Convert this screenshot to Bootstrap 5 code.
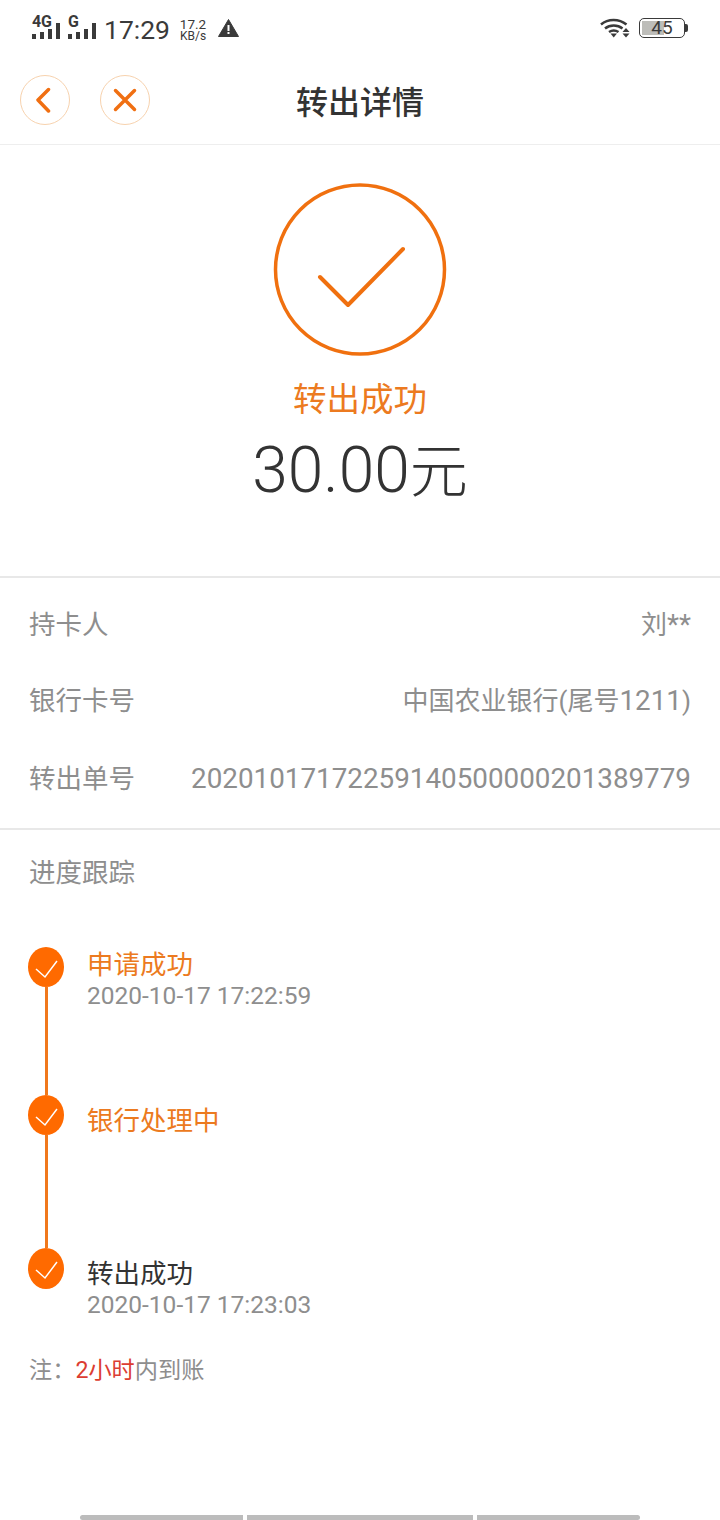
<!DOCTYPE html>
<html lang="zh-CN">
<head>
  <meta charset="UTF-8">
  <title>转出详情</title>
  <link rel="stylesheet" href="https://cdn.jsdelivr.net/npm/bootstrap@5.3.0/dist/css/bootstrap.min.css">
  <style>
    html, body { height: 1520px; overflow: hidden; }
    body { font-family: Roboto, "Liberation Sans", "Noto Sans CJK SC", sans-serif; background: #fff; color: #333; }
    .page-wrap { height: 1520px; }

    /* status bar */
    .status-bar { height: 58px; padding: 15px 32px 0 32px; color: #3a3a3a; }
    .signal-box { position: relative; width: 28px; height: 24px; margin-right: 8px; }
    .signal-box svg { display: block; }
    .signal-txt { position: absolute; left: 0; top: -1px; font-size: 16px; line-height: 16px; font-weight: 700; letter-spacing: -.3px; }
    .clock-txt { font-size: 26.5px; line-height: 30px; margin: 0 9px 0 0; }
    .speed-txt { font-size: 13.5px; line-height: 12px; width: 28px; margin-top: 3px; text-align: center; }
    .speed-txt span { display: block; font-size: 12px; }
    .warn-icon { margin: 4px 0 0 11px; }
    .wifi-icon { margin: 3px 9px 0 0; }
    .batt-box { position: relative; width: 46px; height: 20px; border: 1.5px solid #3a3a3a; border-radius: 5px; margin-top: 3px; font-size: 19px; line-height: 18px; text-align: center; }
    .batt-fill { position: absolute; left: 2px; top: 2px; bottom: 2px; width: 22px; background: #bdbdb9; }
    .batt-num { position: relative; }
    .batt-nub { width: 3px; height: 8px; background: #3a3a3a; margin: 9px 0 0 0; border-radius: 0 2px 2px 0; }

    /* header */
    .top-head { display: grid; grid-template-columns: 1fr auto 1fr; align-items: center; height: 87px; padding: 0 20px 2px; border-bottom: 1px solid #eee; }
    .round-btn { width: 50px; height: 50px; border: 1px solid #f7d2ae; border-radius: 50%; background: #fff; padding: 0; display: flex; align-items: center; justify-content: center; }
    .head-title { font-size: 32px; font-weight: 500; line-height: 40px; color: #333; margin: 5px 0 0; }

    /* hero */
    .hero-box { height: 433px; padding-top: 38px; border-bottom: 2px solid #e8e8e8; }
    .hero-state { font-size: 33.5px; line-height: 44px; color: #ec7a20; margin-top: 21px; }
    .hero-amount { font-size: 64px; font-weight: 300; line-height: 72px; color: #333; margin-top: 13px; }
    .hero-unit { font-size: 58px; }

    /* info rows */
    .info-box { height: 252px; padding: 27px 29px 0; border-bottom: 2px solid #e8e8e8; font-size: 26.5px; color: #8e8e8e; }
    .info-row { height: 40px; line-height: 40px; }
    .info-val { font-size: 27.8px; }
    .info-val span { font-size: 26px; }

    /* progress */
    .track-title { font-size: 26.5px; line-height: 40px; color: #8e8e8e; padding: 23px 29px 0; }
    .track-list { padding: 54px 29px 0 28px; }
    .track-item { display: flex; gap: 23px; }
    .track-item.first-step { height: 148px; }
    .track-item.mid-step { height: 153px; }
    .track-rail { width: 36px; display: flex; flex-direction: column; align-items: center; flex: none; }
    .track-rail svg { flex: none; display: block; }
    .track-line { flex: 1; width: 3px; background: #f0781c; }
    .step-txt { padding-top: 1px; }
    .step-txt.low-txt { padding-top: 9px; }
    .step-name { font-size: 26.5px; line-height: 34px; color: #ec7a20; }
    .step-name.done-dark { color: #333; }
    .step-time { font-size: 24.5px; line-height: 28px; color: #8e8e8e; }
    .note-line { font-size: 23.2px; line-height: 32px; color: #8e8e8e; padding: 0 29px; margin-top: 35px; }
    .note-red { color: #dc3d31; }

    /* bottom strip */
    .bottom-strip { padding: 0 80px; height: 5px; gap: 4px; }
    .strip-seg { background: #bcbcbc; height: 5px; }
  </style>
</head>
<body>
<div class="page-wrap d-flex flex-column">

  <!-- status bar -->
  <div class="status-bar d-flex align-items-start">
    <div class="signal-box">
      <span class="signal-txt">4G</span>
      <svg width="28" height="24" viewBox="0 0 28 24"><g fill="#3a3a3a"><rect x="0" y="19" width="4" height="5"/><rect x="8" y="17" width="4" height="7"/><rect x="16" y="14" width="4" height="10"/><rect x="24" y="8" width="4" height="16"/></g></svg>
    </div>
    <div class="signal-box">
      <span class="signal-txt">G</span>
      <svg width="28" height="24" viewBox="0 0 28 24"><g fill="#3a3a3a"><rect x="0" y="19" width="4" height="5"/><rect x="8" y="17" width="4" height="7"/><rect x="16" y="14" width="4" height="10"/><rect x="24" y="8" width="4" height="16"/></g></svg>
    </div>
    <div class="clock-txt">17:29</div>
    <div class="speed-txt">17.2<span>KB/s</span></div>
    <svg class="warn-icon" width="21" height="18" viewBox="0 0 21 18"><path d="M10.5 0.5 20.5 17.5H0.5Z" fill="#3a3a3a" stroke="#3a3a3a" stroke-linejoin="round"/><rect x="9.5" y="6" width="2" height="6" fill="#fff"/><rect x="9.5" y="13" width="2" height="2" fill="#fff"/></svg>
    <div class="ms-auto d-flex align-items-start">
      <svg class="wifi-icon" width="30" height="20" viewBox="0 0 30 20"><g fill="none" stroke="#3a3a3a" stroke-width="2.500"><path d="M1 6.500C8 .5 19 .5 26.500 6.500"/><path d="M5 10.500C10 6.500 17.500 6.500 22.500 10.500"/><path d="M9 14C12 12 15.500 12 18.500 14"/></g><path d="M10.500 15.500H17L13.700 19.500Z" fill="#3a3a3a"/><path d="M26 10 29.500 14H22.500Z M22.500 15.500H29.500L26 19.500Z" fill="#3a3a3a"/></svg>
      <div class="batt-box"><div class="batt-fill"></div><span class="batt-num">45</span></div>
      <div class="batt-nub"></div>
    </div>
  </div>

  <!-- header -->
  <div class="top-head">
    <div class="d-flex" style="gap:30px">
      <button type="button" class="round-btn" aria-label="返回"><svg width="18" height="26" viewBox="0 0 18 26"><path d="M12.500 2.500 2 13 12.500 24" fill="none" stroke="#f06f12" stroke-width="3.500" stroke-linecap="round" stroke-linejoin="round"/></svg></button>
      <button type="button" class="round-btn" aria-label="关闭"><svg width="24" height="24" viewBox="0 0 24 24"><path d="M2.500 2.500 21.500 21.500M21.500 2.500 2.500 21.500" fill="none" stroke="#f06f12" stroke-width="3.500" stroke-linecap="round"/></svg></button>
    </div>
    <h1 class="head-title">转出详情</h1>
    <div></div>
  </div>

  <!-- result -->
  <div class="hero-box d-flex flex-column align-items-center">
    <svg width="174" height="174" viewBox="0 0 174 174"><circle cx="87" cy="86.500" r="84.500" fill="none" stroke="#f0700f" stroke-width="3.500"/><path d="M47 94 75 122 130 66" fill="none" stroke="#f0700f" stroke-width="4" stroke-linecap="round" stroke-linejoin="round"/></svg>
    <div class="hero-state">转出成功</div>
    <div class="hero-amount">30.00<span class="hero-unit">元</span></div>
  </div>

  <!-- info -->
  <div class="info-box d-flex flex-column">
    <div class="info-row d-flex justify-content-between"><span>持卡人</span><span class="info-val"><span>刘</span>**</span></div>
    <div class="info-row d-flex justify-content-between" style="margin-top:36px"><span>银行卡号</span><span class="info-val"><span>中国农业银行(尾号</span>1211<span>)</span></span></div>
    <div class="info-row d-flex justify-content-between" style="margin-top:38px"><span>转出单号</span><span class="info-val">20201017172259140500000201389779</span></div>
  </div>

  <!-- progress -->
  <div class="track-title">进度跟踪</div>
  <div class="track-list">
    <div class="track-item first-step">
      <div class="track-rail">
        <svg width="36" height="40" viewBox="0 0 36 40"><ellipse cx="18" cy="20" rx="18" ry="20" fill="#ff6a00"/><path d="M8 22 17 30 29 14" fill="none" stroke="#fff" stroke-width="1.500"/></svg>
        <div class="track-line"></div>
      </div>
      <div class="step-txt">
        <div class="step-name">申请成功</div>
        <div class="step-time">2020-10-17 17:22:59</div>
      </div>
    </div>
    <div class="track-item mid-step">
      <div class="track-rail">
        <svg width="36" height="40" viewBox="0 0 36 40"><ellipse cx="18" cy="20" rx="18" ry="20" fill="#ff6a00"/><path d="M8 22 17 30 29 14" fill="none" stroke="#fff" stroke-width="1.500"/></svg>
        <div class="track-line"></div>
      </div>
      <div class="step-txt low-txt">
        <div class="step-name">银行处理中</div>
      </div>
    </div>
    <div class="track-item">
      <div class="track-rail">
        <svg width="36" height="41" viewBox="0 0 36 41"><ellipse cx="18" cy="20.500" rx="18" ry="20.500" fill="#ff6a00"/><path d="M8 22 17 30 29 14" fill="none" stroke="#fff" stroke-width="1.500"/></svg>
      </div>
      <div class="step-txt low-txt">
        <div class="step-name done-dark">转出成功</div>
        <div class="step-time">2020-10-17 17:23:03</div>
      </div>
    </div>
  </div>
  <div class="note-line">注：<span class="note-red">2小时</span>内到账</div>

  <!-- bottom strip -->
  <div class="bottom-strip d-flex mt-auto">
    <div class="strip-seg rounded-start" style="width:163px"></div>
    <div class="strip-seg" style="width:226px"></div>
    <div class="strip-seg rounded-end" style="width:163px"></div>
  </div>
</div>

<script src="https://cdn.jsdelivr.net/npm/bootstrap@5.3.0/dist/js/bootstrap.bundle.min.js"></script>
</body>
</html>
